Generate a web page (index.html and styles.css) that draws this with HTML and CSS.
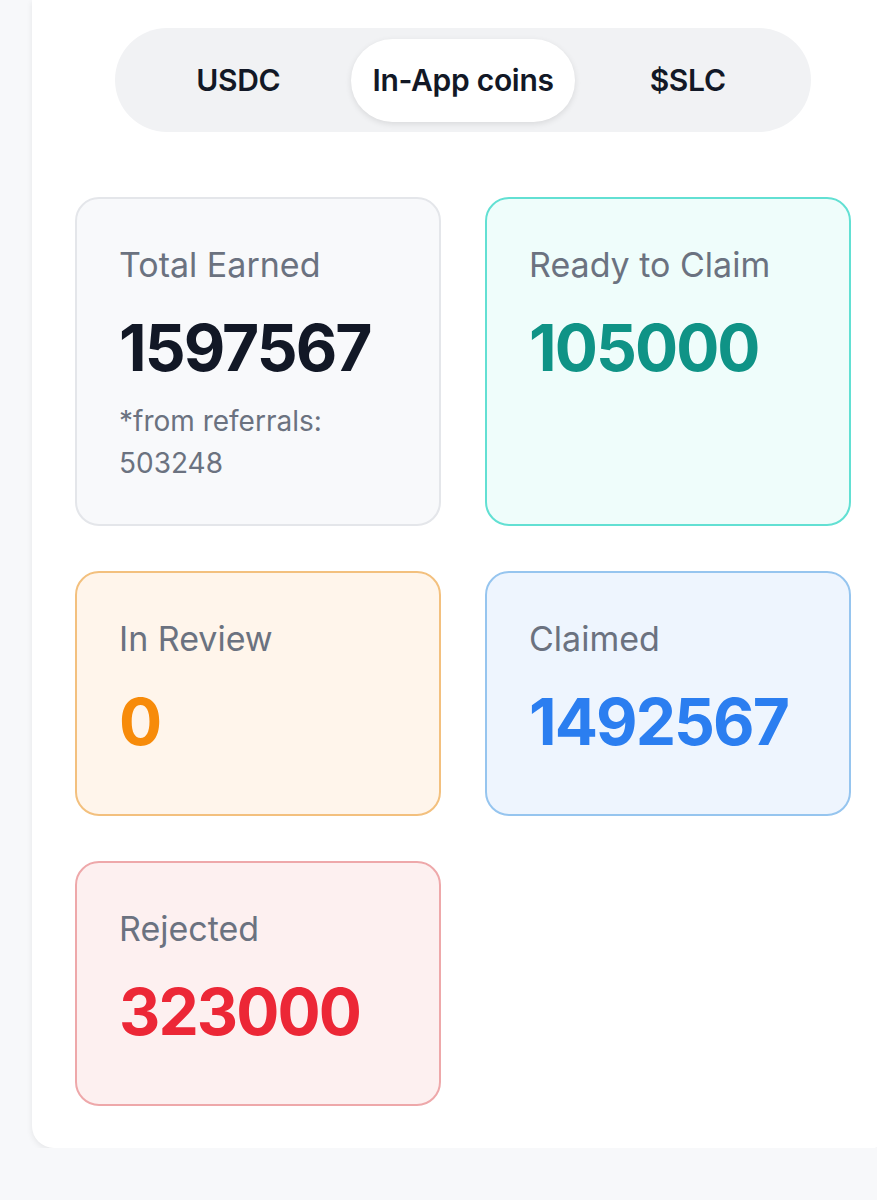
FILE: index.html
```html
<!DOCTYPE html>
<html>

<head>
    <meta http-equiv="Content-Type" content="text/html;charset=UTF-8">
    <title>Rewards</title>
    <link rel="stylesheet" href="styles.css">
</head>

<body>
    <div class="panel">
        <div class="tabs">
            <button class="tab">USDC</button>
            <button class="tab active">In-App coins</button>
            <button class="tab">$SLC</button>
        </div>

        <div class="stats">
            <div class="stat gray">
                <p class="label">Total Earned</p>
                <p class="value">1597567</p>
                <p class="note">*from referrals: 503248</p>
            </div>
            <div class="stat teal">
                <p class="label">Ready to Claim</p>
                <p class="value">105000</p>
            </div>
            <div class="stat orange">
                <p class="label">In Review</p>
                <p class="value">0</p>
            </div>
            <div class="stat blue">
                <p class="label">Claimed</p>
                <p class="value">1492567</p>
            </div>
            <div class="stat red">
                <p class="label">Rejected</p>
                <p class="value">323000</p>
            </div>
        </div>
    </div>
</body>

</html>
```

FILE: styles.css
```css
* {
    box-sizing: border-box;
    margin: 0;
    padding: 0;
}

body {
    background: #f7f8fa;
    font-family: Inter, "Noto Sans", sans-serif;
    padding-left: 32px;
    overflow: hidden;
}

.panel {
    width: 862px;
    background: #ffffff;
    border-radius: 0 0 22px 22px;
    box-shadow: 0 2px 6px rgba(0, 0, 0, 0.08);
    padding: 28px 43px 42px;
}

.tabs {
    width: 696px;
    margin: 0 auto;
    height: 104px;
    display: flex;
    align-items: center;
    padding: 0 11px;
    background: #f1f2f4;
    border-radius: 52px;
}

.tab {
    flex: 1;
    height: 83px;
    border: none;
    background: transparent;
    border-radius: 42px;
    font-family: inherit;
    font-size: 30px;
    font-weight: 600;
    color: #121826;
    letter-spacing: -0.01em;
}

.tab.active {
    background: #ffffff;
    box-shadow: 0 2px 6px rgba(0, 0, 0, 0.1);
}

.stats {
    margin-top: 65px;
    display: grid;
    grid-template-columns: 1fr 1fr;
    column-gap: 44px;
    row-gap: 45px;
}

.stat {
    border: 2px solid;
    border-radius: 24px;
    padding: 46px 42px 40px;
}

.label {
    font-size: 34px;
    line-height: 40px;
    color: #6b7280;
}

.value {
    margin: 24px 0 14px;
    font-size: 64px;
    line-height: 77px;
    font-weight: 700;
    letter-spacing: -0.03em;
}

.note {
    font-size: 28px;
    line-height: 42px;
    color: #6b7280;
}

.gray {
    background: #f8f9fb;
    border-color: #e4e6ea;
}

.gray .value {
    color: #121826;
}

.teal {
    background: #effdfb;
    border-color: #62e0d3;
}

.teal .value {
    color: #0f9386;
}

.orange {
    background: #fff5eb;
    border-color: #f3c07e;
}

.orange .value {
    color: #f78b0a;
}

.blue {
    background: #eef5fe;
    border-color: #96c5ef;
}

.blue .value {
    color: #2b7ef0;
}

.red {
    background: #fdf0f0;
    border-color: #eea8aa;
}

.red .value {
    color: #ec2736;
}
```
